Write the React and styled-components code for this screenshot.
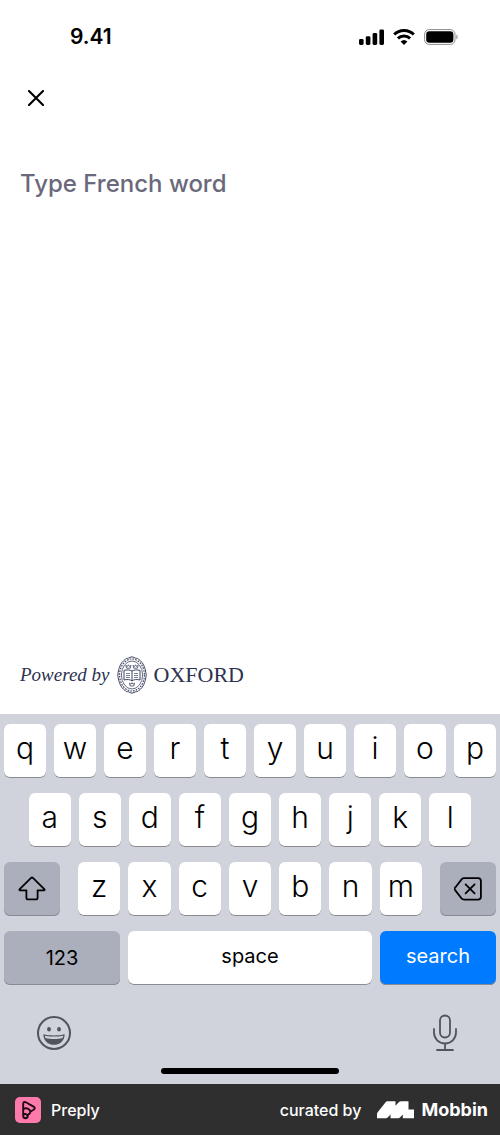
import React from 'react';
import styled, { createGlobalStyle, css } from 'styled-components';

const GlobalStyle = createGlobalStyle`
    * {
        box-sizing: border-box;
    }

    body {
        margin: 0;
        background-color: #ffffff;
        font-family: Inter, 'Liberation Sans', sans-serif;
    }

    button {
        border: none;
        padding: 0;
        background: none;
        color: inherit;
        font-family: inherit;
        cursor: pointer;
    }

    svg {
        display: block;
    }
`;

const Screen = styled.div`
    display: flex;
    flex-direction: column;
    min-height: 100vh;
`;

const StatusBar = styled.header`
    display: flex;
    justify-content: space-between;
    align-items: center;
    height: 74px;
    padding: 0 42px 0 70px;
`;

const Time = styled.span`
    font-weight: 600;
    font-size: 21px;
    line-height: 24px;
`;

const StatusIcons = styled.div`
    display: flex;
    align-items: center;
    gap: 9px;
`;

const Toolbar = styled.nav`
    display: flex;
    align-items: center;
    height: 48px;
    padding: 0 20px;
`;

const CloseButton = styled.button`
    display: flex;
    align-items: center;
    justify-content: center;
    width: 32px;
    height: 32px;
`;

const Main = styled.main`
    flex: 1;
    display: flex;
    flex-direction: column;
    justify-content: space-between;
    padding: 39px 20px 20px;
`;

const WordInput = styled.input`
    width: 100%;
    height: 44px;
    padding: 0;
    border: none;
    outline: none;
    font-family: inherit;
    font-weight: 500;
    font-size: 24px;
    color: #121117;

    &::placeholder {
        color: #6a697c;
        opacity: 1;
    }
`;

const Credit = styled.div`
    display: flex;
    align-items: center;
    gap: 7px;
    color: #2c3350;
    font-family: 'Liberation Serif', serif;
    line-height: 24px;
`;

const Powered = styled.span`
    font-style: italic;
    font-size: 19px;
`;

const Oxford = styled.span`
    font-size: 22px;
`;

const Keyboard = styled.section`
    display: flex;
    flex-direction: column;
    gap: 15px;
    padding: 10px 4px;
    background-color: #d0d3db;
`;

const KeyRow = styled.div`
    display: flex;
    justify-content: center;
    gap: 8px;
    padding: 0 ${(props) => (props.$inset ? '5%' : '0')};
`;

const LetterGroup = styled.div`
    flex: 7;
    display: flex;
    gap: 8px;
    margin: 0 10px;
`;

const Key = styled.button`
    flex: 1;
    display: flex;
    align-items: center;
    justify-content: center;
    min-width: 0;
    height: 54px;
    padding-bottom: 7px;
    border-radius: 6px;
    background-color: #ffffff;
    box-shadow: inset 0 -1px 0 #898b90;
    color: #000000;
    font-weight: 300;
    font-size: 30px;
    line-height: 36px;

    ${(props) =>
        props.$wide &&
        css`
            font-weight: 400;
            font-size: 20px;
            padding-bottom: 5px;
        `}

    ${(props) =>
        props.$tone === 'grey' &&
        css`
            background-color: #abafbc;
            padding-bottom: 1px;
        `}

    ${(props) =>
        props.$tone === 'blue' &&
        css`
            background-color: #007aff;
            color: #ffffff;
        `}
`;

const SideKey = styled(Key)`
    flex: 0 0 56px;
`;

const SpaceKey = styled(Key)`
    flex: 2.1;
`;

const KeyboardFooter = styled.div`
    display: flex;
    justify-content: space-between;
    padding: 14px 38px 0 32px;
    color: #50545c;
`;

const HomeIndicator = styled.div`
    align-self: center;
    width: 36%;
    height: 6px;
    margin-top: 1px;
    border-radius: 3px;
    background-color: #000000;
`;

const Banner = styled.footer`
    display: flex;
    align-items: center;
    justify-content: space-between;
    height: 51px;
    padding: 0 12px 0 15px;
    background-color: #2f2f2f;
    color: #ffffff;
    font-weight: 500;
    font-size: 16px;
    line-height: 24px;
`;

const Brand = styled.div`
    display: flex;
    align-items: center;
    gap: ${(props) => props.$gap};
`;

const Mobbin = styled.span`
    display: flex;
    align-items: center;
    gap: 7px;
    font-weight: 700;
    font-size: 18px;
`;

const SignalIcon = () => (
    <svg width="25" height="16" viewBox="0 0 25 16" fill="#000">
        <rect x="0" y="10" width="4.6" height="6" rx="1.4" />
        <rect x="6.8" y="7.2" width="4.6" height="8.8" rx="1.4" />
        <rect x="13.6" y="4" width="4.6" height="12" rx="1.4" />
        <rect x="20.4" y="0.4" width="4.6" height="15.6" rx="1.4" />
    </svg>
);

const WifiIcon = () => (
    <svg width="22" height="16" viewBox="0 0 22 16" fill="none" stroke="#000" strokeWidth="3">
        <path d="M1.2 5.5a14 14 0 0 1 19.6 0" />
        <path d="M4.9 9.4a8.8 8.8 0 0 1 12.2 0" />
        <path d="M11 16 7.6 12.6a5 5 0 0 1 6.8 0Z" fill="#000" stroke="none" />
    </svg>
);

const BatteryIcon = () => (
    <svg width="34" height="16" viewBox="0 0 34 16">
        <rect x="0.6" y="0.6" width="30.4" height="14.8" rx="4.6" fill="none" stroke="#8c8c8c" />
        <rect x="2.2" y="2.2" width="27.2" height="11.6" rx="3.2" fill="#000" />
        <path d="M32.4 5.5c1.6.7 1.6 4.3 0 5Z" fill="#8c8c8c" />
    </svg>
);

const CloseIcon = () => (
    <svg width="16" height="16" viewBox="0 0 16 16" stroke="#000" strokeWidth="2.1" strokeLinecap="round">
        <path d="m1 1 14 14M15 1 1 15" />
    </svg>
);

// oxford crest: scalloped belt, three crowns and an open book
const CrestIcon = () => (
    <svg width="30" height="38" viewBox="0 0 30 38" fill="none" stroke="#3d4460" strokeWidth="0.8">
        <path d="M15 .8c1.600 0 2.300 1.200 3.600 1.400 1.500.2 2.700.2 3.400 1.400.7 1.100 2.300 1.400 2.900 2.700.6 1.400 1.700 2 2 3.400.2 1.600 1.300 2.400 1.400 3.900.1 1.700.9 3.400.9 5.400s-.8 3.700-.9 5.400c-.1 1.500-1.200 2.300-1.400 3.900-.3 1.400-1.400 2-2 3.400-.6 1.300-2.200 1.600-2.900 2.700-.7 1.200-1.900 1.200-3.400 1.400-1.300.2-2 1.400-3.600 1.400s-2.300-1.200-3.600-1.400c-1.500-.2-2.700-.2-3.400-1.400-.7-1.100-2.300-1.400-2.900-2.700-.6-1.400-1.700-2-2-3.400-.2-1.600-1.300-2.400-1.400-3.900C1.600 22.700.8 21 .8 19s.8-3.700.9-5.400c.1-1.500 1.200-2.300 1.400-3.900.3-1.400 1.400-2 2-3.400C5.700 5 7.300 4.700 8 3.600c.7-1.200 1.900-1.200 3.400-1.400C12.700 2 13.400.8 15 .8Z" strokeWidth="1" />
        <ellipse cx="15" cy="19" rx="12.4" ry="16" strokeDasharray="1.600 1.200" strokeWidth="1.200" />
        <ellipse cx="15" cy="19" rx="10.600" ry="14" />
        <path d="M15 15v9.600M7 14.400c3-.8 6-.6 8 .6 2-1.200 5-1.400 8-.6V24c-3-.8-6-.6-8 .8-2-1.400-5-1.600-8-.8Z" strokeWidth="1" />
        <path d="M9 17.500h4M9 19.500h4M9 21.500h4M17 17.500h4M17 19.500h4M17 21.500h4" strokeWidth="0.700" />
        <path d="m8.800 9.400.8 2.800h3.600l.8-2.800-1.600 1-1-1.600-1 1.600ZM16 9.400l.8 2.800h3.600l.8-2.800-1.600 1-1-1.600-1 1.600ZM12.400 27.200l.8 2.800h3.600l.8-2.800-1.600 1-1-1.600-1 1.600Z" />
    </svg>
);

const ShiftIcon = () => (
    <svg width="28" height="26" viewBox="0 0 28 26" fill="none" stroke="#000" strokeWidth="1.8" strokeLinejoin="round">
        <path d="M13.1 1.9 1.7 13.2c-.6.7-.4 1.2.4 1.2h6.3v7.7c0 .9.4 1.3 1.2 1.3h8.8c.8 0 1.2-.4 1.2-1.3v-7.7h6.3c.8 0 1-.5.4-1.2L14.9 1.9c-.7-.7-1.1-.7-1.8 0Z" />
    </svg>
);

const BackspaceIcon = () => (
    <svg width="28" height="24" viewBox="0 0 28 24" fill="none" stroke="#000" strokeWidth="1.8" strokeLinecap="round" strokeLinejoin="round">
        <path d="M10 1.2h14c1.9 0 2.9 1 2.9 2.9v15.6c0 1.9-1 2.9-2.9 2.9H10c-.9 0-1.6-.3-2.2-.9L1.5 13.6c-1.2-1.2-1.2-2.2 0-3.4L7.8 2.1c.6-.6 1.3-.9 2.2-.9Z" />
        <path d="m11.6 7.4 9 9M20.6 7.4l-9 9" />
    </svg>
);

const EmojiIcon = () => (
    <svg width="36" height="36" viewBox="0 0 36 36">
        <circle cx="18" cy="18" r="16" fill="none" stroke="currentColor" strokeWidth="2" />
        <ellipse cx="13" cy="14.2" rx="1.9" ry="2.3" fill="currentColor" />
        <ellipse cx="23" cy="14.2" rx="1.9" ry="2.3" fill="currentColor" />
        <path d="M7.4 19.2c6 1.6 15.2 1.6 21.2 0 .2 6.2-4.4 10.6-10.6 10.6S7.2 25.4 7.4 19.2Z" fill="currentColor" />
        <path d="M8.800 20.700c5.600 1.200 12.800 1.200 18.400 0-.1 1-.3 1.600-.7 2.200-4.900 1.300-12.100 1.300-17 0-.4-.6-.6-1.200-.7-2.200Z" fill="#d0d3db" />
    </svg>
);

const MicIcon = () => (
    <svg width="26" height="38" viewBox="0 0 26 38" fill="none" stroke="currentColor" strokeWidth="1.8" strokeLinecap="round">
        <rect x="8" y="1.5" width="10" height="22" rx="5" />
        <path d="M2 15v3.500a11 11 0 0 0 22 0V15M13 29.500V36M5 36h16" />
    </svg>
);

const PreplyIcon = () => (
    <svg width="26" height="26" viewBox="0 0 26 26" fill="none" stroke="#1b0a12" strokeWidth="1.9" strokeLinejoin="round">
        <rect width="26" height="26" rx="5" fill="#ff7aac" stroke="none" />
        <path d="M8.200 6.700c0-1.600 1.200-2.200 2.600-1.400l7.800 4.300c1.500.9 1.500 2.300 0 3.200l-3.300 1.900c.2 1-.2 1.700-1.100 2.200l-1.500.9v1.300c0 1.300-.9 2.200-2.200 2.200s-2.300-.9-2.300-2.200Z" />
        <path d="M8.200 12c3.300-1.500 6.600-.5 7.100 2.700M8.200 17.700c1.600-1.200 4.100-.8 4.500 1.400" />
    </svg>
);

const MobbinIcon = () => (
    <svg width="37" height="18" viewBox="0 0 37 18" fill="#fff">
        <path d="M0 17.300V13.200c0-.9.300-1.500.9-2.200L8.200 1.700C9 .7 9.900.3 11.100.3h7.400v4.500l3-3.300C22.300.7 23.200.3 24.300.3h7.200v8.300H37v8.700H25.800v-3.800l-2.600 2.700c-.7.800-1.500 1.100-2.500 1.100h-7.200v-3.800l-2.600 2.700c-.7.800-1.500 1.100-2.500 1.100Z" />
    </svg>
);

const Letters = ({ letters }) => letters.split('').map((letter) => <Key key={letter}>{letter}</Key>);

const App = () => {
    return (
        <Screen>
            <GlobalStyle />
            <StatusBar>
                <Time>9.41</Time>
                <StatusIcons>
                    <SignalIcon />
                    <WifiIcon />
                    <BatteryIcon />
                </StatusIcons>
            </StatusBar>
            <Toolbar>
                <CloseButton aria-label="Close">
                    <CloseIcon />
                </CloseButton>
            </Toolbar>
            <Main>
                <WordInput type="text" aria-label="Type French word" placeholder="Type French word" />
                <Credit>
                    <Powered>Powered by</Powered>
                    <CrestIcon />
                    <Oxford>OXFORD</Oxford>
                </Credit>
            </Main>
            <Keyboard>
                <KeyRow>
                    <Letters letters="qwertyuiop" />
                </KeyRow>
                <KeyRow $inset>
                    <Letters letters="asdfghjkl" />
                </KeyRow>
                <KeyRow>
                    <SideKey $tone="grey" aria-label="Shift">
                        <ShiftIcon />
                    </SideKey>
                    <LetterGroup>
                        <Letters letters="zxcvbnm" />
                    </LetterGroup>
                    <SideKey $tone="grey" aria-label="Delete">
                        <BackspaceIcon />
                    </SideKey>
                </KeyRow>
                <KeyRow>
                    <Key $wide $tone="grey">123</Key>
                    <SpaceKey $wide>space</SpaceKey>
                    <Key $wide $tone="blue">search</Key>
                </KeyRow>
                <KeyboardFooter>
                    <button aria-label="Emoji">
                        <EmojiIcon />
                    </button>
                    <button aria-label="Dictation">
                        <MicIcon />
                    </button>
                </KeyboardFooter>
                <HomeIndicator />
            </Keyboard>
            <Banner>
                <Brand $gap="10px">
                    <PreplyIcon />
                    <span>Preply</span>
                </Brand>
                <Brand $gap="16px">
                    <span>curated by</span>
                    <Mobbin>
                        <MobbinIcon />
                        Mobbin
                    </Mobbin>
                </Brand>
            </Banner>
        </Screen>
    );
};

export default App;
